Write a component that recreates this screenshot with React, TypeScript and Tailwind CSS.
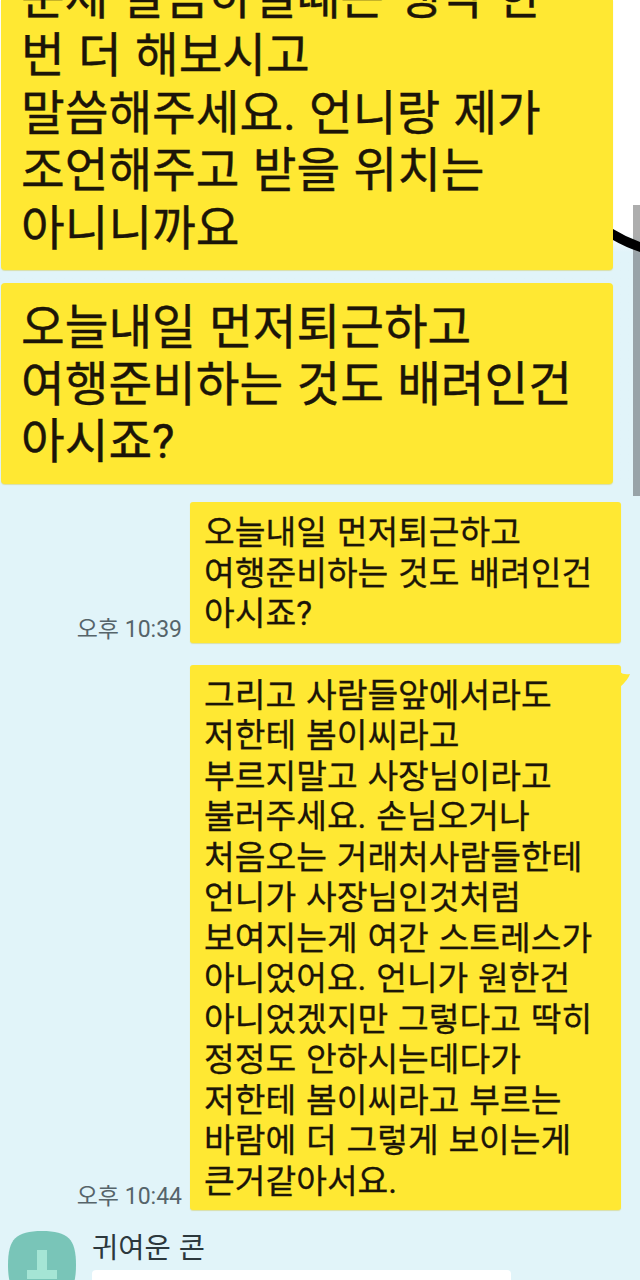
interface Message {
  id: number;
  time: string;
  tail: boolean;
  lines: string[];
}

const enlarged: string[][] = [
  [
    '문제 말씀하실때는 생각 한',
    '번 더 해보시고',
    '말씀해주세요. 언니랑 제가',
    '조언해주고 받을 위치는',
    '아니니까요',
  ],
  ['오늘내일 먼저퇴근하고', '여행준비하는 것도 배려인건', '아시죠?'],
];

const messages: Message[] = [
  {
    id: 1,
    time: '오후 10:39',
    tail: false,
    lines: ['오늘내일 먼저퇴근하고', '여행준비하는 것도 배려인건', '아시죠?'],
  },
  {
    id: 2,
    time: '오후 10:44',
    tail: true,
    lines: [
      '그리고 사람들앞에서라도',
      '저한테 봄이씨라고',
      '부르지말고 사장님이라고',
      '불러주세요. 손님오거나',
      '처음오는 거래처사람들한테',
      '언니가 사장님인것처럼',
      '보여지는게 여간 스트레스가',
      '아니었어요. 언니가 원한건',
      '아니었겠지만 그렇다고 딱히',
      '정정도 안하시는데다가',
      '저한테 봄이씨라고 부르는',
      '바람에 더 그렇게 보이는게',
      '큰거같아서요.',
    ],
  },
];

function Lines({ lines }: { lines: string[] }) {
  return (
    <>
      {lines.map((line) => (
        <p key={line} className="whitespace-nowrap">
          {line}
        </p>
      ))}
    </>
  );
}

function MessageRow({ message }: { message: Message }) {
  return (
    <div className="flex items-end justify-end gap-2 pr-[19px]">
      <span className="-mb-px text-[23px] leading-[28px] text-[#56646a] whitespace-nowrap">{message.time}</span>
      <div className="relative w-[431px] shrink-0 rounded-[3px] bg-[#ffe833] pt-[11px] pb-[8px] pl-[14px] text-[33.4px] leading-[40.5px] [word-spacing:1.5px] text-[#1c1508] shadow-[0_1px_1px_#d9dfa8] [-webkit-text-stroke:0.3px_#1c1508]">
        {message.tail && (
          <svg className="absolute top-[7px] -right-[9px] h-[16px] w-[10px]" viewBox="0 0 10 16">
            <path d="M0 0 Q3 3 10 2 Q8 8 0 15 Z" fill="#ffe833" />
          </svg>
        )}
        <Lines lines={message.lines} />
      </div>
    </div>
  );
}

export default function App() {
  return (
    <div className="relative h-[1280px] w-[640px] overflow-hidden bg-[#e1f4f9] font-[Roboto,'Noto_Sans_CJK_KR',sans-serif]">
      {/* Enlarged bubbles */}
      <div className="flex flex-col gap-[13px] bg-linear-to-b from-white from-[232px] to-[#e1f4f9] to-[252px] pl-px">
        <div className="flex h-[270px] w-[612px] flex-col justify-end overflow-hidden rounded-b-[4px] bg-[#ffe833] pb-[11px] pl-[20px] text-[47.5px] leading-[57.8px] [word-spacing:1.5px] text-[#1c1508] shadow-[0_1px_1px_#d9dfa8] [-webkit-text-stroke:0.4px_#1c1508]">
          <Lines lines={enlarged[0]} />
        </div>
        <div className="h-[201px] w-[612px] rounded-[4px] bg-[#ffe833] pt-[17px] pl-[20px] text-[47.5px] leading-[57.2px] [word-spacing:1.5px] text-[#1c1508] shadow-[0_1px_1px_#d9dfa8] [-webkit-text-stroke:0.4px_#1c1508]">
          <Lines lines={enlarged[1]} />
        </div>
      </div>

      {/* Chat */}
      <div className="mt-[18px] flex flex-col gap-[22px]">
        {messages.map((message) => (
          <MessageRow key={message.id} message={message} />
        ))}
      </div>

      {/* Incoming message */}
      <div className="mt-[21px] flex gap-4 pl-2">
        <svg className="h-[68px] w-[68px] shrink-0" viewBox="0 0 68 68">
          <path d="M34 0 C60 0 68 8 68 34 C68 60 60 68 34 68 C8 68 0 60 0 34 C0 8 8 0 34 0 Z" fill="#79c5b8" />
          <path d="M29 19 H39 V39 H49 V48 H19 V39 H29 Z" fill="#a5e5d5" />
        </svg>
        <div>
          <p className="pt-px text-[28.5px] leading-[34px] [word-spacing:1px] text-[#2c383d]">귀여운 콘</p>
          <div className="mt-[4px] h-[60px] w-[419px] rounded-[4px] bg-white" />
        </div>
      </div>

      {/* Scrollbar with the marker stroke over it */}
      <div className="absolute top-[205px] right-0 h-[291px] w-[7px] bg-linear-to-b from-[#adadad] from-[30px] to-[#98a3a8] to-[50px]" />
      <svg className="absolute top-[226px] left-[613px] h-[28px] w-[27px]" viewBox="0 0 27 28">
        <path d="M0 3 Q13 11 27 16 V26 Q12 21 0 14 Z" fill="#000" />
      </svg>
    </div>
  );
}
